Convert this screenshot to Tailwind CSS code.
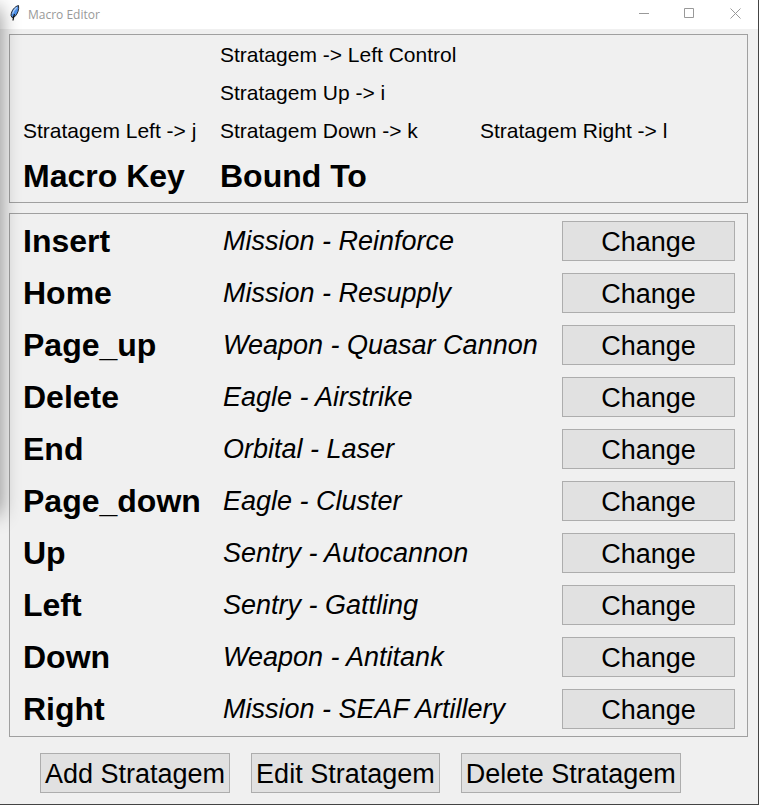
<!DOCTYPE html>
<html lang="en">
<head>
<meta charset="utf-8">
<title>Macro Editor</title>
<script src="https://cdn.jsdelivr.net/npm/@tailwindcss/browser@4"></script>
</head>
<body class="bg-[#f0f0f0] font-['Liberation_Sans',Arial,sans-serif] text-black">
<div class="relative flex min-h-screen flex-col overflow-hidden border-r border-b border-[#444444]">
  <header class="flex h-[29px] items-center bg-white pl-[7px] text-[#999999]">
    <svg class="mr-[5px] mb-1 h-4 w-4" viewBox="0 0 16 16" aria-hidden="true">
      <path d="M11.500 .5C8 1.300 4.200 5.500 4 10.500L5 12.500L8 11.500C10.800 8.500 12.200 4.500 11.500 .5Z" fill="#4f93ee" stroke="#16181c" stroke-width=".9"/>
      <path d="M9.800 2.200C8 3.800 6.200 6 5.600 8.700" fill="none" stroke="#b7d3f5" stroke-width="1.200"/>
      <path d="M7.500 9C6.700 11 6.200 13 6 15.500" fill="none" stroke="#111" stroke-width="1.200"/>
    </svg>
    <h1 class="flex-1 font-['Open_Sans','Noto_Sans',sans-serif] text-[12px] leading-4">Macro Editor</h1>
    <button type="button" aria-label="Minimize" class="flex h-full w-[45px] items-center justify-center pb-[3px]">
      <svg class="h-[11px] w-[11px]" viewBox="0 0 11 11" fill="none" stroke="currentColor"><path d="M0 5.500H10"/></svg>
    </button>
    <button type="button" aria-label="Maximize" class="flex h-full w-[45px] items-center justify-center pb-[3px]">
      <svg class="h-[11px] w-[11px]" viewBox="0 0 11 11" fill="none" stroke="currentColor"><path d="M.5 .5H9.500V9.500H.5Z"/></svg>
    </button>
    <button type="button" aria-label="Close" class="flex h-full w-[46px] items-center justify-center pb-[3px]">
      <svg class="h-[11px] w-[11px]" viewBox="0 0 11 11" fill="none" stroke="currentColor"><path d="M.5 .5L10.500 10.500M10.500 .5L.5 10.500"/></svg>
    </button>
  </header>

  <main class="flex flex-col gap-[10px] px-[9px] pt-[5px] pr-[10px]">
    <section class="grid grid-cols-[197px_260px_1fr] border border-[#a0a0a0] pt-px pl-[13px] text-[21px] leading-[38px]">
      <p class="col-start-2">Stratagem -&gt; Left Control</p>
      <p class="col-start-2">Stratagem Up -&gt; i</p>
      <p class="col-start-1">Stratagem Left -&gt; j</p>
      <p>Stratagem Down -&gt; k</p>
      <p>Stratagem Right -&gt; l</p>
      <h2 class="text-[32px] leading-[52px] font-bold">Macro Key</h2>
      <h2 class="text-[32px] leading-[52px] font-bold">Bound To</h2>
    </section>

    <section class="border border-[#a0a0a0] pt-px pr-3 pb-px pl-[13px]">
      <table class="w-full">
        <tbody id="macros"></tbody>
      </table>
    </section>
  </main>

  <footer class="flex gap-[21px] px-10 pt-4 pb-[11px] text-[27px]">
    <button type="button" class="h-10 border border-[#adadad] bg-[#e1e1e1] px-1">Add Stratagem</button>
    <button type="button" class="h-10 border border-[#adadad] bg-[#e1e1e1] px-1">Edit Stratagem</button>
    <button type="button" class="h-10 border border-[#adadad] bg-[#e1e1e1] px-1">Delete Stratagem</button>
  </footer>

  <div class="pointer-events-none absolute top-2 -left-5 h-[506px] w-5 shadow-[0_0_20px_rgba(0,0,0,0.45)]"></div>
</div>

<template id="row">
  <tr class="h-[52px]">
    <th scope="row" class="w-[200px] p-0 text-left text-[32px] leading-[52px] font-bold"></th>
    <td class="p-0 text-[27px] leading-[52px] italic"></td>
    <td class="w-[173px] p-0"><button type="button" class="block h-10 w-full border border-[#adadad] bg-[#e1e1e1] text-[27px]">Change</button></td>
  </tr>
</template>
<script>
  const macros = [
    ["Insert", "Mission - Reinforce"],
    ["Home", "Mission - Resupply"],
    ["Page_up", "Weapon - Quasar Cannon"],
    ["Delete", "Eagle - Airstrike"],
    ["End", "Orbital - Laser"],
    ["Page_down", "Eagle - Cluster"],
    ["Up", "Sentry - Autocannon"],
    ["Left", "Sentry - Gattling"],
    ["Down", "Weapon - Antitank"],
    ["Right", "Mission - SEAF Artillery"],
  ];
  const row = document.getElementById("row");
  for (const [key, action] of macros) {
    const item = row.content.cloneNode(true);
    item.querySelector("th").textContent = key;
    item.querySelector("td").textContent = action;
    item.querySelector("button").setAttribute("aria-label", "Change " + key);
    document.getElementById("macros").append(item);
  }
</script>
</body>
</html>
